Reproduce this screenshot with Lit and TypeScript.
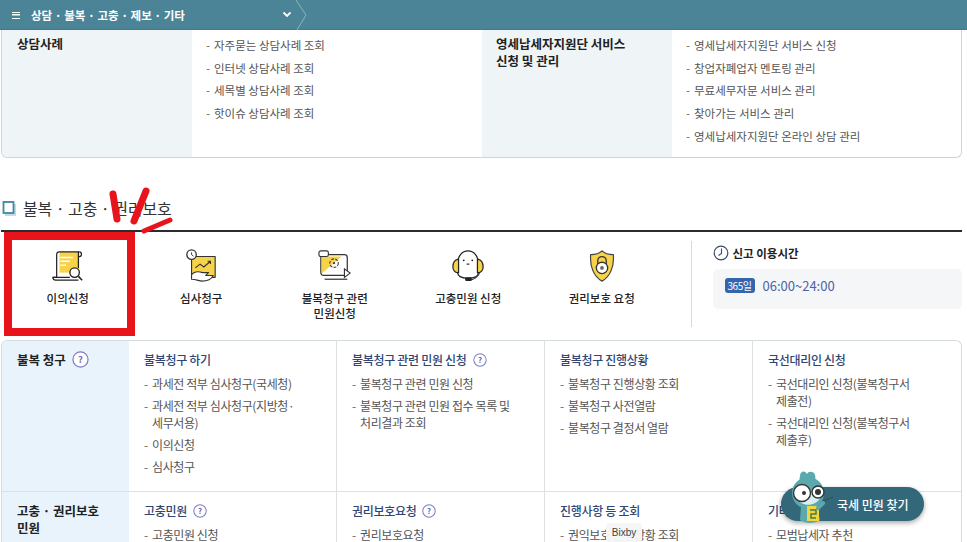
import { LitElement, html, css, svg } from "lit";
import { customElement } from "lit/decorators.js";

const q = (cls: string) => html`<svg class=${cls} viewBox="0 0 18 18"><circle cx="9" cy="9" r="8" fill="#fff" stroke="#7f7cc6" stroke-width="1.3"/><text x="9" y="12.6" text-anchor="middle" font-size="10" font-weight="700" fill="#6f6cb8" font-family="Noto Sans CJK KR, sans-serif">?</text></svg>`;

const icons = [
  svg`<path d="M9 3h21v22H9z" fill="#f7d34a"/><path d="M30 3h-21c-2 0-3 1-3 3v24H2c0 2 1 3 3 3h24" fill="none" stroke="#222" stroke-width="1.3"/><path d="M30 3c3 0 3 5 0 5h-1M29 3v17M2 30h18" fill="none" stroke="#222" stroke-width="1.3"/><path d="M10 9h13M10 13h10M10 17h6" stroke="#fff" stroke-width="1.4"/><circle cx="25" cy="25" r="5" fill="#fff" stroke="#222" stroke-width="1.4"/><path d="M29 29l4 4" stroke="#222" stroke-width="1.6"/>`,
  svg`<path d="M8 8h25v22H8z" fill="#f7d34a" stroke="#333" stroke-width="1.2" stroke-linejoin="round"/><circle cx="8" cy="6" r="5" fill="#fff" stroke="#333" stroke-width="1.4"/><path d="M8 3.500V6l2 1.500" fill="none" stroke="#333"/><path d="M12 20l5-4 4 3 7-6M25 13h3v3" fill="none" stroke="#333" stroke-width="1.2"/><path d="M8 27c4-4 8-3 12-2h6l-3 3h8c-2 4-6 6-12 6-3 0-6-2-11-2z" fill="#fff" stroke="#333" stroke-width="1.2" stroke-linejoin="round"/>`,
  svg`<rect x="3" y="6" width="28" height="22" rx="3" fill="#fff" stroke="#333" stroke-width="1.3"/><path d="M4 26V8h21z" fill="#f7d34a"/><rect x="1" y="2" width="10" height="6" rx="2" fill="#fff" stroke="#333" stroke-width="1.2"/><circle cx="17" cy="15" r="4.500" fill="none" stroke="#444" stroke-width="1.2" stroke-dasharray="3 1.4"/><circle cx="17" cy="15" r="1.2" fill="#444"/><path d="M28 21l6 4.500-6 4.500z" fill="#fff" stroke="#333" stroke-width="1.2"/><path d="M7 32h24" stroke="#333" stroke-width="1.3"/>`,
  svg`<path d="M7 16C7 7 12 2 18 2s11 5 11 14v9c0 4-5 6-11 6s-11-2-11-6z" fill="#fff" stroke="#222" stroke-width="1.3"/><path d="M7 11c-4 1-5 5-5 8s2 6 5 6h1V11z" fill="#f7d34a" stroke="#222" stroke-width="1.3"/><path d="M29 11c4 1 5 5 5 8s-2 6-5 6h-1V11z" fill="#f7d34a" stroke="#222" stroke-width="1.3"/><circle cx="13.500" cy="12" r="1" fill="#222"/><circle cx="22.500" cy="12" r="1" fill="#222"/><path d="M16.500 16h3" stroke="#222" stroke-width="1.2"/><path d="M30 25c0 4-5 7-10 8" fill="none" stroke="#222"/><rect x="15" y="30" width="7" height="4" rx="1.500" fill="#222"/>`,
  svg`<path d="M18 2c3 3 7 4 12 4 1 12-3 23-12 28C9 29 5 18 6 6c5 0 9-1 12-4z" fill="#f7d34a" stroke="#444" stroke-width="1.3" stroke-linejoin="round"/><path d="M13.500 16v-3.500a4.500 4.500 0 0 1 9 0V16" fill="none" stroke="#333" stroke-width="1.4"/><circle cx="18" cy="20" r="6" fill="#fff" stroke="#333" stroke-width="1.4"/><circle cx="18" cy="20" r="2" fill="#666"/>`,
];

const services = [
  ["이의신청"],
  ["심사청구"],
  ["불복청구 관련", "민원신청"],
  ["고충민원 신청"],
  ["권리보호 요청"],
];

const li = (t: string) => html`<li>${t}</li>`;

@customElement("app-root")
export class AppRoot extends LitElement {
  static styles = css`
    :host { display: block; width: 967px; height: 542px; overflow: hidden; position: relative; background: #fff; color: #222;
      font-family: "Noto Sans CJK KR", "Noto Sans", sans-serif; font-size: 11.5px; }
    ul { list-style: none; margin: 0; padding: 0; display: flex; flex-direction: column; }
    li { position: relative; padding-left: 8px; color: #555; line-height: 17px; white-space: pre-line; }
    li::before { content: "-"; position: absolute; left: 0; top: 0; color: #666; }
    .bar { height: 30px; background: #4b8496; box-shadow: inset 0 -1px 0 #447787; display: flex; align-items: center; position: relative; }
    .crumb { width: 305px; height: 30px; display: flex; align-items: center; color: #fff; font-weight: 700; font-size: 11.5px; padding-left: 12px; box-sizing: border-box; position: relative; }
    .burger { width: 8px; height: 7px; position: relative; margin-right: 11px; box-sizing: border-box; border-top: 1.500px solid #fff; border-bottom: 1.500px solid #fff; background: linear-gradient(#fff,#fff) center/100% 1.500px no-repeat; }
    .caret { position: absolute; left: 282px; top: 11px; }
    .slash { position: absolute; left: 296px; top: 0; }
    .top { margin: 0 5px 0 1px; height: 127px; border: 1px solid #c9d6da; border-top: 0; border-radius: 0 0 6px 6px; display: grid; grid-template-columns: 190px 290px 190px 1fr; overflow: hidden; }
    .top .lab { background: #eff5f7; padding: 6px 10px 0 15px; font-weight: 700; font-size: 12.5px; line-height: 16.5px; color: #222; }
    .top .lab.second { padding-left: 14px; }
    .top ul { padding: 7px 0 0 14px; gap: 5.7px; }
    .head { display: flex; align-items: center; gap: 7px; margin: 40px 5px 0 2px; height: 32px; padding-bottom: 12px; box-sizing: border-box; font-size: 16px; font-weight: 400; color: #333; letter-spacing: -0.1px; }
    .head svg { flex: none; }
    .rule { height: 2px; background: #2c2c2c; margin: 0 5px 0 1px; }
    .svc { display: flex; margin: 0 5px 0 1px; height: 107px; }
    .item { width: 133.5px; display: flex; flex-direction: column; align-items: center; padding-top: 17px; box-sizing: border-box; font-size: 11.5px; font-weight: 500; color: #222; line-height: 15px; text-align: center; }
    .item svg { width: 34px; height: 34px; margin-bottom: 8px; }
    .hours { margin-left: 22px; margin-top: 9px; height: 86px; border-left: 1px solid #d9d9d9; padding-left: 21px; flex: 1; display: flex; flex-direction: column; }
    .h-title { display: flex; align-items: center; gap: 4px; font-weight: 700; font-size: 11.5px; height: 22px; color: #222; margin-top: 1px; }
    .h-box { margin-top: 5px; height: 40px; background: #f5f6f8; border-radius: 5px; display: flex; align-items: flex-start; padding: 9px 0 0 12px; box-sizing: border-box; gap: 8px; color: #4a64a4; font-size: 13px; line-height: 16px; }
    .badge { background: #3565ad; color: #fff; font-size: 10px; border-radius: 3px; width: 30px; height: 15px; line-height: 15px; text-align: center; letter-spacing: -0.5px; }
    .table { margin: 1px 5px 0 1px; height: 220px; border: 1px solid #d5dcdf; border-bottom: 0; border-radius: 6px 6px 0 0; display: grid; grid-template-columns: 127px 207px 208px 208px 1fr; grid-template-rows: 150px 1fr; overflow: hidden; }
    .rlab { background: #e9f3fb; padding: 10px 8px 0 15px; font-weight: 700; font-size: 12.5px; line-height: 17px; color: #222; display: flex; align-items: flex-start; gap: 6px; }
    .rlab svg.big { width: 17px; height: 17px; flex: none; }
    .cell { padding: 10px 12px 0 15px; border-left: 1px solid #e0e0e0; }
    .cell.first { border-left: 0; }
    .b { border-top: 1px solid #e0e0e0; }
    .t { display: flex; align-items: center; gap: 6px; height: 17px; color: #2f4675; font-weight: 500; font-size: 12px; letter-spacing: -0.3px; margin-bottom: 7px; }
    .t svg { width: 14px; height: 14px; flex: none; }
    .cell ul { gap: 5px; }
    .cell li { font-size: 12px; letter-spacing: -0.4px; }
    .overlay { position: absolute; left: 0; top: 0; pointer-events: none; }
    .redbox { position: absolute; left: 4px; top: 232px; width: 131px; height: 104px; border: 8px solid #e8141c; box-sizing: border-box; }
    .fab { position: absolute; left: 781px; top: 487px; width: 143px; height: 34px; border-radius: 17px; background: #33687a; box-shadow: 0 2px 5px rgba(0,0,0,.35); color: #fff; font-size: 12px; font-weight: 500; display: flex; align-items: center; padding-left: 56px; box-sizing: border-box; }
    .mascot { position: absolute; left: 787px; top: 470px; }
    .bixby { position: absolute; left: 606px; top: 523px; width: 36px; height: 19px; background: rgba(246,246,246,.96); font: 10px "Liberation Sans", sans-serif; color: #444; display: flex; align-items: center; justify-content: center; border-radius: 3px; }
  `;

  render() {
    return html`
      <div class="bar">
        <div class="crumb"><span class="burger"></span>상담 · 불복 · 고충 · 제보 · 기타
          <svg class="caret" width="10" height="7" viewBox="0 0 10 7"><path d="M1.500 1.500L5 5l3.500-3.500" fill="none" stroke="#fff" stroke-width="1.800"/></svg>
          <svg class="slash" width="12" height="30" viewBox="0 0 12 30"><path d="M0 0l10 15L1 30" fill="none" stroke="#8fb3bf" stroke-width="1"/></svg>
        </div>
      </div>
      <section class="top">
        <div class="lab">상담사례</div>
        <ul>${["자주묻는 상담사례 조회", "인터넷 상담사례 조회", "세목별 상담사례 조회", "핫이슈 상담사례 조회"].map(li)}</ul>
        <div class="lab second">영세납세자지원단 서비스<br />신청 및 관리</div>
        <ul>${["영세납세자지원단 서비스 신청", "창업자폐업자 멘토링 관리", "무료세무자문 서비스 관리", "찾아가는 서비스 관리", "영세납세자지원단 온라인 상담 관리"].map(li)}</ul>
      </section>
      <h2 class="head">
        <svg width="14" height="15" viewBox="0 0 14 15"><rect x="3" y="3" width="11" height="12" fill="#c6dbe8"/><rect x="1.500" y="1" width="10" height="11" fill="#fff" stroke="#3f87a3" stroke-width="1.800"/></svg>
        불복 · 고충 · 권리보호
      </h2>
      <div class="rule"></div>
      <section class="svc">
        ${services.map((s, i) => html`<div class="item"><svg viewBox="0 0 36 36">${icons[i]}</svg>${s.map((l) => html`<span>${l}</span>`)}</div>`)}
        <div class="hours">
          <div class="h-title"><svg width="16" height="16" viewBox="0 0 16 16"><circle cx="8" cy="8" r="6.800" fill="#fff" stroke="#3c4a68" stroke-width="1.200"/><path d="M8.500 3.500V8.500L5.500 10.500" fill="none" stroke="#3c4a68" stroke-width="1.100"/></svg>신고 이용시간</div>
          <div class="h-box"><span class="badge">365일</span><span>06:00~24:00</span></div>
        </div>
      </section>
      <section class="table">
        <div class="rlab"><span>불복 청구</span>${q("big")}</div>
        <div class="cell first"><div class="t">불복청구 하기</div><ul>${["과세전 적부 심사청구(국세청)", "과세전 적부 심사청구(지방청·\n세무서용)", "이의신청", "심사청구"].map(li)}</ul></div>
        <div class="cell"><div class="t">불복청구 관련 민원 신청 ${q("")}</div><ul>${["불복청구 관련 민원 신청", "불복청구 관련 민원 접수 목록 및\n처리결과 조회"].map(li)}</ul></div>
        <div class="cell"><div class="t">불복청구 진행상황</div><ul>${["불복청구 진행상황 조회", "불복청구 사전열람", "불복청구 결정서 열람"].map(li)}</ul></div>
        <div class="cell"><div class="t">국선대리인 신청</div><ul>${["국선대리인 신청(불복청구서\n제출전)", "국선대리인 신청(불복청구서\n제출후)"].map(li)}</ul></div>
        <div class="rlab b"><span>고충 · 권리보호<br />민원</span></div>
        <div class="cell first b"><div class="t">고충민원 ${q("")}</div><ul>${["고충민원 신청"].map(li)}</ul></div>
        <div class="cell b"><div class="t">권리보호요청 ${q("")}</div><ul>${["권리보호요청"].map(li)}</ul></div>
        <div class="cell b"><div class="t">진행사항 등 조회</div><ul>${["권익보호 진행상황 조회"].map(li)}</ul></div>
        <div class="cell b"><div class="t">기타</div><ul>${["모범납세자 추천"].map(li)}</ul></div>
      </section>
      <div class="redbox"></div>
      <svg class="overlay" width="967" height="542" viewBox="0 0 967 542">
        <g fill="none" stroke="#e8141c" stroke-linecap="round" stroke-width="7">
          <path d="M113 194l4 25"/><path d="M146 191l-12 30"/><path d="M144 231l26-11" stroke-width="5"/>
        </g>
      </svg>
      <div class="bixby">Bixby</div>
      <div class="fab">국세 민원 찾기</div>
      <svg class="mascot" width="50" height="56" viewBox="0 0 50 56">
        <path d="M32 33l14-6" stroke="#3b4a4a" stroke-width="1"/>
        <path d="M13 6c0-5 5-6 7-2 1-3 7-3 8 1 1 3 0 6-1 8H14c-1-2-2-4-1-7z" fill="#5aa9ae"/>
        <path d="M14 36h16l3 14c-5 4-15 4-20 0z" fill="#5aa9ae"/>
        <circle cx="21" cy="23" r="16" fill="#5aa9ae"/>
        <path d="M10 28c3 9 19 9 23 0 0-8-23-8-23 0z" fill="#d8eef0"/>
        <circle cx="15" cy="23" r="8.500" fill="#fff" stroke="#333" stroke-width="1.400"/>
        <circle cx="31" cy="22" r="6" fill="#fff" stroke="#333" stroke-width="1.400"/>
        <circle cx="17" cy="23" r="2" fill="#333"/>
        <circle cx="31" cy="22" r="3" fill="#333"/>
        <path d="M20 36h12v15H20z" fill="#f3d63c"/>
        <path d="M23 40h6v4h-5v4h5" fill="none" stroke="#4a7a50" stroke-width="1.500"/>
        <path d="M31 38l5-5" stroke="#5aa9ae" stroke-width="4" stroke-linecap="round"/>
      </svg>
    `;
  }
}
